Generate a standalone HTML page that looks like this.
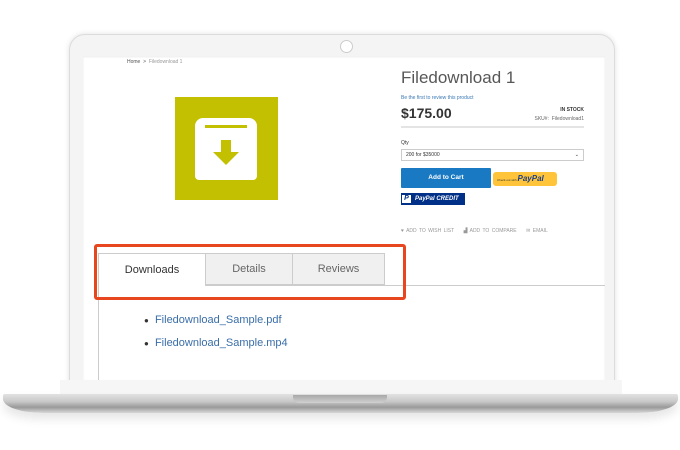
<!DOCTYPE html>
<html><head><meta charset="utf-8"><style>
*{margin:0;padding:0;box-sizing:border-box}
body{width:680px;height:450px;background:#fff;position:relative;overflow:hidden;font-family:"Liberation Sans",sans-serif}
.a{position:absolute}
</style></head><body>
<div class="a" style="left:69px;top:34px;width:546px;height:370px;border-radius:16px 16px 0 0;background:#f4f4f4;border:1px solid #dcdcdc;box-shadow:0 0 6px rgba(0,0,0,.12)"></div>
<div class="a" style="left:340px;top:40px;width:13px;height:13px;border-radius:50%;background:#fff;border:1px solid #ccc"></div>
<div class="a" style="left:83px;top:56px;width:522px;height:324px;background:#fff;box-shadow:inset 0 1px 2px rgba(0,0,0,.08)"></div>
<div class="a" style="left:127px;top:59px;font-size:5px;color:#555">Home &nbsp;&gt;&nbsp; <span style="color:#999">Filedownload 1</span></div>
<div class="a" style="left:175px;top:97px;width:103px;height:103px;background:#c2c000"></div>
<div class="a" style="left:195px;top:118px;width:62px;height:62px;background:#fff;border-radius:8px 8px 4px 4px"></div>
<div class="a" style="left:205px;top:125px;width:42px;height:3px;background:#c2c000"></div>
<svg class="a" style="left:195px;top:118px" width="62" height="62"><path d="M26 22h10v12h8l-13 13-13-13h8z" fill="#c2c000"/></svg>
<div class="a" style="left:401px;top:68px;font-size:17px;color:#575757">Filedownload 1</div>
<div class="a" style="left:401px;top:95px;font-size:5px;color:#3a78b5">Be the first to review this product</div>
<div class="a" style="left:401px;top:105px;font-size:14px;font-weight:bold;color:#333">$175.00</div>
<div class="a" style="left:530px;top:107px;width:54px;text-align:right;font-size:5px;font-weight:bold;color:#333">IN STOCK</div>
<div class="a" style="left:510px;top:116px;width:74px;text-align:right;font-size:5px;color:#666">SKU#: &nbsp;Filedownload1</div>
<div class="a" style="left:401px;top:126px;width:183px;height:2px;background:#e4e4e4"></div>
<div class="a" style="left:401px;top:140px;font-size:5px;color:#333">Qty</div>
<div class="a" style="left:401px;top:149px;width:183px;height:12px;border:1px solid #ccc;font-size:5px;color:#333;padding:2px 4px">200 for $35000<span style="float:right">⌄</span></div>
<div class="a" style="left:401px;top:168px;width:90px;height:20px;background:#1979c3;color:#fff;font-size:6.5px;font-weight:bold;text-align:center;line-height:20px;border-radius:1px">Add to Cart</div>
<div class="a" style="left:493px;top:172px;width:64px;height:14px;background:#ffc439;border-radius:3px;font-size:3px;color:#333;line-height:14px;padding-left:4px">Check out with <b style="font-size:8px;font-style:italic;color:#1a3f8a">PayPal</b></div>
<div class="a" style="left:401px;top:193px;width:64px;height:12px;background:#003087;color:#fff;font-size:6px;font-weight:bold;font-style:italic;line-height:12px;padding-left:14px">PayPal CREDIT</div>
<div class="a" style="left:402px;top:195px;width:9px;height:8px;background:#fff;color:#003087;font-size:7px;font-weight:bold;font-style:italic;line-height:8px;text-align:center">P</div>
<div class="a" style="left:401px;top:228px;font-size:5px;color:#999;word-spacing:1px">♥ ADD TO WISH LIST &nbsp;&nbsp; ▟ ADD TO COMPARE &nbsp;&nbsp; ✉ EMAIL</div>
<div class="a" style="left:98px;top:285px;width:507px;height:1px;background:#ccc"></div>
<div class="a" style="left:98px;top:253px;width:1px;height:127px;background:#ccc"></div>
<div class="a" style="left:98px;top:253px;width:108px;height:33px;background:#fff;border:1px solid #ccc;border-bottom:none;font-size:11px;color:#333;text-align:center;line-height:32px">Downloads</div>
<div class="a" style="left:205px;top:253px;width:88px;height:32px;background:#f0f0f0;border:1px solid #ccc;font-size:11px;color:#666;text-align:center;line-height:31px">Details</div>
<div class="a" style="left:292px;top:253px;width:93px;height:32px;background:#f0f0f0;border:1px solid #ccc;font-size:11px;color:#666;text-align:center;line-height:31px">Reviews</div>
<div class="a" style="left:94px;top:244px;width:312px;height:56px;border:3px solid #e8461e;border-radius:3px"></div>
<div class="a" style="left:144px;top:309px;font-size:11px;color:#3a6ea8;line-height:22px">
<div><span style="color:#333;font-size:8px">●</span>&nbsp; Filedownload_Sample.pdf</div>
<div><span style="color:#333;font-size:8px">●</span>&nbsp; Filedownload_Sample.mp4</div></div>
<div class="a" style="left:60px;top:380px;width:562px;height:14px;background:#f6f6f6"></div>
<div class="a" style="left:3px;top:394px;width:675px;height:19px;border-radius:2px 2px 40px 40px/2px 2px 14px 14px;background:linear-gradient(#e2e2e2,#c8c8c8 40%,#9a9a9a 70%,#d8d8d8);box-shadow:0 6px 10px rgba(0,0,0,.1)"></div>
<div class="a" style="left:293px;top:395px;width:94px;height:8px;border-radius:0 0 6px 6px;background:linear-gradient(#a8a8a8,#d0d0d0)"></div>
</body></html>
